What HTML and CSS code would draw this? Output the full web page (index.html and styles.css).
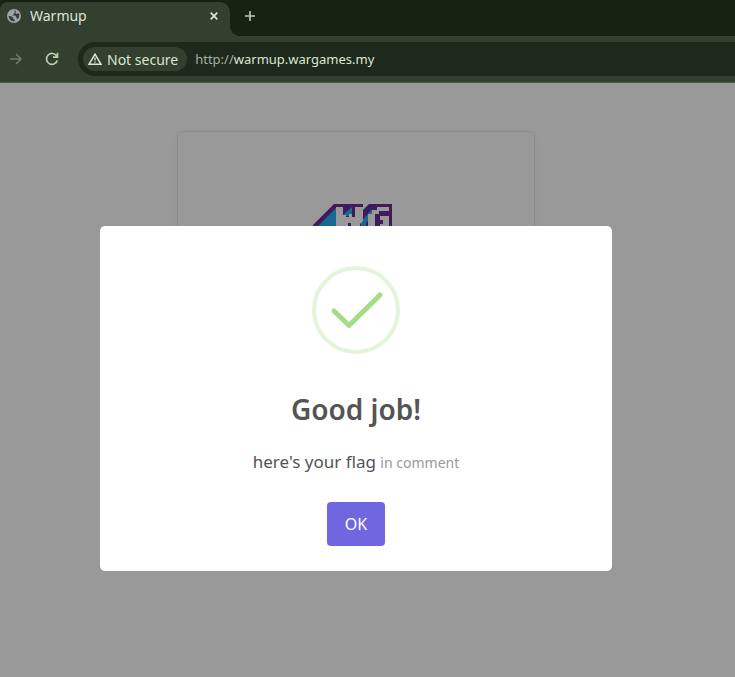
FILE: index.html
```html
<!DOCTYPE html>
<html lang="en">
<head>
<meta charset="utf-8">
<title>Warmup</title>
<link rel="stylesheet" href="styles.css">
</head>
<body>
<header class="browser">
  <div class="tabs">
    <div class="tab">
      <svg class="globe" viewBox="0 0 14 14" aria-hidden="true"><circle cx="7" cy="7" r="7" fill="#9da3aa"/><path d="M7 1.600C9 1.600 9.500 2.500 8.500 3.500L6.800 4.200V5.500L5 6.500H8L9.500 8V9.500L11.200 9.800C12.500 7.500 12.600 5.500 11.500 4L9.800 5L8.800 4.600M1.600 6.800L4.500 7.400L6.200 8.800V10.200H7.600V12.400C4 12.500 1.800 10 1.600 6.800Z" fill="#333f2f"/></svg>
      <span class="tab-title">Warmup</span>
      <button class="icon-button" aria-label="Close tab"><svg width="8" height="8" viewBox="0 0 8 8"><path d="M.7.7l6.600 6.600M7.300.7L.7 7.300" stroke="#dbe5d3" stroke-width="1.700"/></svg></button>
    </div>
    <button class="icon-button new-tab" aria-label="New tab"><svg width="10" height="10" viewBox="0 0 10 10"><path d="M5 0v10M0 5h10" stroke="#bccbb2" stroke-width="1.600"/></svg></button>
  </div>
  <div class="toolbar">
    <button class="icon-button" aria-label="Forward"><svg width="12" height="12" viewBox="0 0 12 12"><path d="M0 6h11M6 1l5 5-5 5" fill="none" stroke="#727d6b" stroke-width="1.500"/></svg></button>
    <button class="icon-button reload" aria-label="Reload"><svg width="14" height="14" viewBox="0 0 14 14"><path d="M11.800 4.200A5.500 5.500 0 1 0 12.300 8.500M12.500.8v4.400H8" fill="none" stroke="#b9d0ac" stroke-width="1.700"/></svg></button>
    <div class="address">
      <button class="security"><svg width="14" height="12" viewBox="0 0 14 12" aria-hidden="true"><path d="M7 1.200L13 11.300H1Z" fill="none" stroke="#dbe5d3" stroke-width="1.500"/><path d="M7 4.500v3M7 8.500v1.300" stroke="#dbe5d3" stroke-width="1.300"/></svg>Not secure</button>
      <span class="url"><span class="scheme">http://</span>warmup.wargames.my</span>
    </div>
  </div>
</header>
<main class="page">
  <section class="card">
    <svg class="logo" viewBox="0 0 86 60" role="img" aria-label="WG">
      <path d="M21 0H79V60H0V21Z" fill="#3f1a5c"/>
      <path d="M23 4V60H5V22ZM30 11L39 3V12H30ZM48 18L59 5V12L53 19V60H48Z" fill="#176a90"/>
      <path d="M23 3h7v8h3v2h3V10h3v3h3V3h8v14l-3 3v40H38V19h-3v41H23Z" fill="#999"/>
      <path d="M50 0H56L50 6ZM64 3H76V7H66V10H62V22H67V20H70V16H67V12H76V60H55V10H59V6H64Z" fill="#999"/>
    </svg>
  </section>
  <div class="dialog" role="dialog" aria-modal="true" aria-labelledby="title">
    <svg class="success" viewBox="0 0 88 88" aria-hidden="true"><circle cx="44" cy="44" r="42" fill="none" stroke="#e4f4da" stroke-width="4"/><path d="M22 45L37 59.500L68 29" fill="none" stroke="#a5dc86" stroke-width="5" stroke-linecap="round" stroke-linejoin="round"/></svg>
    <h1 id="title">Good job!</h1>
    <p>here's your flag <small>in comment</small></p>
    <button class="confirm">OK</button>
  </div>
</main>
</body>
</html>
```
FILE: styles.css
```css
* { box-sizing: border-box; }
body { margin: 0; min-height: 100vh; background: #999; font-family: "Noto Sans", sans-serif; overflow: hidden; }
button { border: 0; font-family: inherit; }
svg { display: block; }
.browser { background: #333f2f; border-bottom: 1px solid #505b4c; }
.tabs { position: relative; display: flex; height: 36px; padding-top: 2px; background: #162212; }
.tabs::after { content: ""; position: absolute; left: 230px; bottom: 0; width: 10px; height: 10px; background: radial-gradient(circle at 100% 0, transparent 10px, #333f2f 10px); }
.tab { display: flex; align-items: center; width: 230px; padding: 0 10px 6px 7px; background: #333f2f; border-radius: 8px 10px 0 0; }
.tab-title { flex: 1; margin-left: 9px; font-size: 14px; line-height: 20px; color: #dbe5d3; }
.globe { width: 14px; height: 14px; }
.icon-button { display: grid; place-items: center; width: 12px; height: 16px; padding: 0; background: none; }
.new-tab { width: 40px; height: 28px; }
.toolbar { display: flex; align-items: center; padding: 6px 0 6px 10px; }
.toolbar .reload { width: 14px; margin: 0 19px 0 23px; }
.address { display: flex; align-items: center; flex: 1; height: 34px; padding-left: 5px; background: #1d291a; border-radius: 17px 0 0 17px; }
.security { display: flex; align-items: center; gap: 5px; height: 24px; padding: 0 9px 0 5px; border-radius: 12px; background: #333f2f; color: #dbe5d3; font-size: 14px; }
.url { margin-left: 8px; font-size: 13px; color: #dbe5d3; }
.scheme { color: #a5afa0; }
.page { display: grid; justify-items: center; padding: 48px 23px 0 0; }
.card, .dialog { grid-area: 1 / 1; }
.card { width: 358px; height: 360px; padding-top: 72px; border: 1px solid #8c8c8c; border-radius: 6px; box-shadow: 0 2px 8px #0000000a; }
.logo { width: 86px; height: 60px; margin: 0 auto; }
.dialog { z-index: 1; display: flex; flex-direction: column; align-items: center; width: 512px; max-width: 100%; margin-top: 95px; padding: 40px 20px 25px; background: #fff; border-radius: 5px; color: #545454; }
.success { width: 88px; height: 88px; }
h1 { margin: 35px 0 0; font-size: 28px; line-height: 40px; font-weight: 600; }
p { margin: 19px 0 0; font-size: 17px; line-height: 28px; }
small { font-size: 14px; color: #999; }
.confirm { margin-top: 25px; width: 58px; height: 44px; border-radius: 4px; background: #7066e0; color: #fff; font-size: 16px; }
```
